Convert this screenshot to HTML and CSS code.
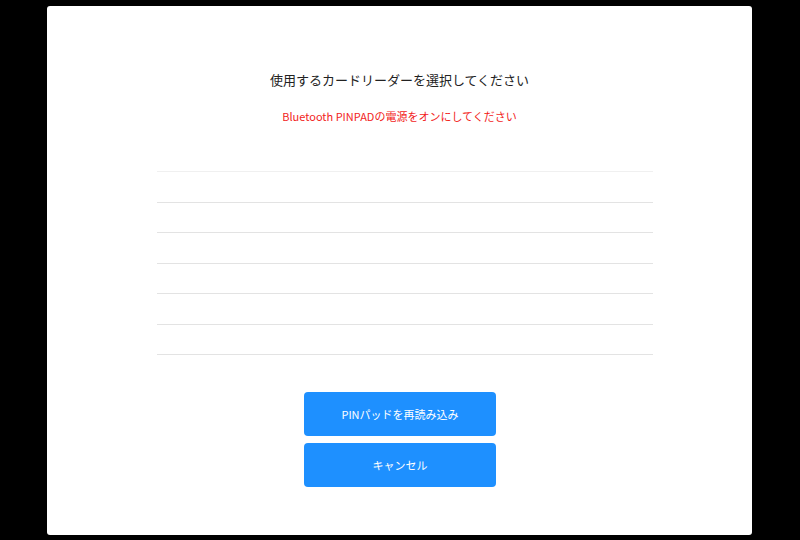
FILE: index.html
```html
<!DOCTYPE html>
<html lang="ja">
<head>
<meta charset="utf-8">
<link rel="stylesheet" href="styles.css">
</head>
<body>
<div class="card">
  <h1 class="title">使用するカードリーダーを選択してください</h1>
  <p class="warn">Bluetooth PINPADの電源をオンにしてください</p>
  <ul class="list">
    <li></li><li></li><li></li><li></li><li></li><li></li>
  </ul>
  <div class="actions">
    <button class="btn">PINパッドを再読み込み</button>
    <button class="btn">キャンセル</button>
  </div>
</div>
</body>
</html>
```
FILE: styles.css
```css
html, body {
  margin: 0;
  padding: 0;
  background: #000;
  height: 100%;
}
body {
  font-family: "Noto Sans CJK JP", "Noto Sans", sans-serif;
  padding-top: 6px;
  padding-left: 47px;
  box-sizing: border-box;
}
.card {
  width: 705px;
  height: 529px;
  background: #fff;
  border-radius: 3px;
  box-sizing: border-box;
  padding-top: 64px;
  display: flex;
  flex-direction: column;
}
.title {
  margin: 0;
  font-size: 13px;
  font-weight: normal;
  line-height: 20px;
  color: #222;
  text-align: center;
}
.warn {
  margin: 18px 0 0;
  font-size: 11px;
  line-height: 16px;
  color: #f2231c;
  text-align: center;
}
.list {
  list-style: none;
  margin: 47px 0 0 110px;
  padding: 0;
  width: 496px;
  border-top: 1px solid #f0f0f0;
}
.list li {
  height: 30.5px;
  box-sizing: border-box;
  border-bottom: 1px solid #e3e3e3;
}
.actions {
  margin-top: 37px;
  display: flex;
  flex-direction: column;
  align-items: center;
  gap: 7px;
  padding-left: 1px;
}
.btn {
  width: 192px;
  height: 44px;
  border: none;
  border-radius: 4px;
  background: #1e90ff;
  color: #fff;
  font-family: "Noto Sans CJK JP", "Noto Sans", sans-serif;
  font-size: 11px;
  padding: 0;
}
```
